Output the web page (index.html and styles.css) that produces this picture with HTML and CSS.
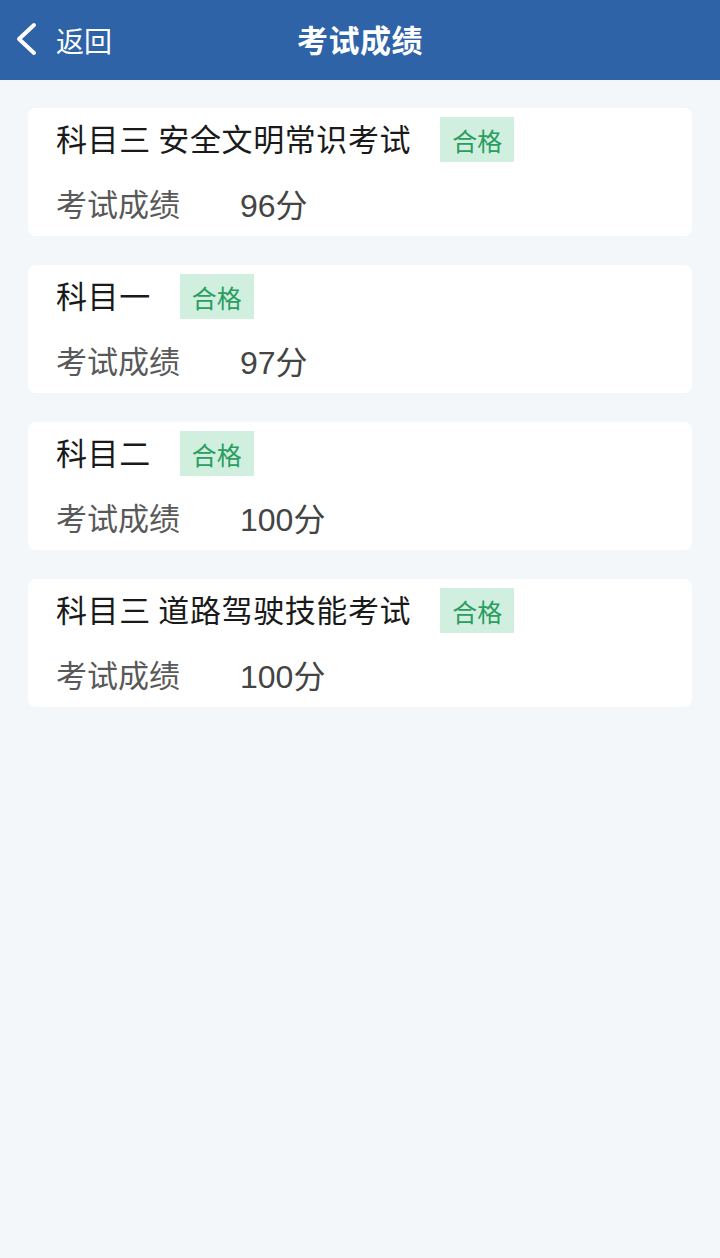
FILE: index.html
```html
<!DOCTYPE html>
<html lang="zh-CN">
<head>
    <meta charset="UTF-8">
    <meta name="viewport" content="width=device-width, initial-scale=1.0">
    <title>考试成绩</title>
    <link rel="stylesheet" href="styles.css">
</head>
<body>

<!-- 顶部导航 -->
<div class="nav-bar">
    <div class="nav-back">
        <svg class="back-icon" width="24" height="36" viewBox="0 0 24 36">
            <polyline points="19,3 4,17 19,31" fill="none" stroke="#fff" stroke-width="4" stroke-linecap="round" stroke-linejoin="round"/>
        </svg>
        <span>返回</span>
    </div>
    <div class="nav-title">考试成绩</div>
</div>

<!-- 成绩列表 -->
<div class="list">
    <div class="card">
        <div class="card-title">
            <span class="name">科目三 安全文明常识考试</span>
            <span class="badge">合格</span>
        </div>
        <div class="card-score">
            <span class="label">考试成绩</span>
            <span class="score">96分</span>
        </div>
    </div>

    <div class="card">
        <div class="card-title">
            <span class="name">科目一</span>
            <span class="badge">合格</span>
        </div>
        <div class="card-score">
            <span class="label">考试成绩</span>
            <span class="score">97分</span>
        </div>
    </div>

    <div class="card">
        <div class="card-title">
            <span class="name">科目二</span>
            <span class="badge">合格</span>
        </div>
        <div class="card-score">
            <span class="label">考试成绩</span>
            <span class="score">100分</span>
        </div>
    </div>

    <div class="card">
        <div class="card-title">
            <span class="name">科目三 道路驾驶技能考试</span>
            <span class="badge">合格</span>
        </div>
        <div class="card-score">
            <span class="label">考试成绩</span>
            <span class="score">100分</span>
        </div>
    </div>
</div>

</body>
</html>
```

FILE: styles.css
```css
body {
    margin: 0;
    font-family: "Noto Sans CJK SC", "Noto Sans", sans-serif;
    background-color: #f3f7fa;
    min-height: 1258px;
}

.nav-bar {
    height: 80px;
    background-color: #2e63a8;
    color: white;
    display: flex;
    align-items: center;
    justify-content: center;
    position: relative;
}

.nav-back {
    position: absolute;
    left: 15px;
    top: 0;
    height: 80px;
    display: flex;
    align-items: center;
    gap: 17px;
    font-size: 28px;
}

.back-icon {
    display: block;
    margin-top: -1px;
}

.nav-title {
    font-size: 31px;
    font-weight: bold;
    letter-spacing: 0.5px;
    margin-top: -3px;
}

.list {
    padding: 28px 28px;
    display: flex;
    flex-direction: column;
    gap: 29px;
}

.card {
    background-color: white;
    border-radius: 8px;
    padding: 9px 28px;
    display: flex;
    flex-direction: column;
    gap: 21px;
}

.card-title {
    display: flex;
    align-items: center;
    gap: 29px;
    height: 45px;
    font-size: 31px;
    color: #1a1a1a;
}

.name {
    padding-bottom: 4px;
    letter-spacing: 0.6px;
}

.badge {
    height: 45px;
    padding: 0 12px;
    display: flex;
    align-items: center;
    background-color: #d0efdf;
    color: #2a9d60;
    font-size: 25px;
}

.card-score {
    display: flex;
    align-items: center;
    height: 44px;
    padding-bottom: 5px;
    box-sizing: border-box;
    font-size: 31px;
}

.label {
    width: 184px;
    color: #595959;
}

.score {
    font-family: "Liberation Sans", "Noto Sans CJK SC", sans-serif;
    font-size: 32px;
    color: #444;
}
```
